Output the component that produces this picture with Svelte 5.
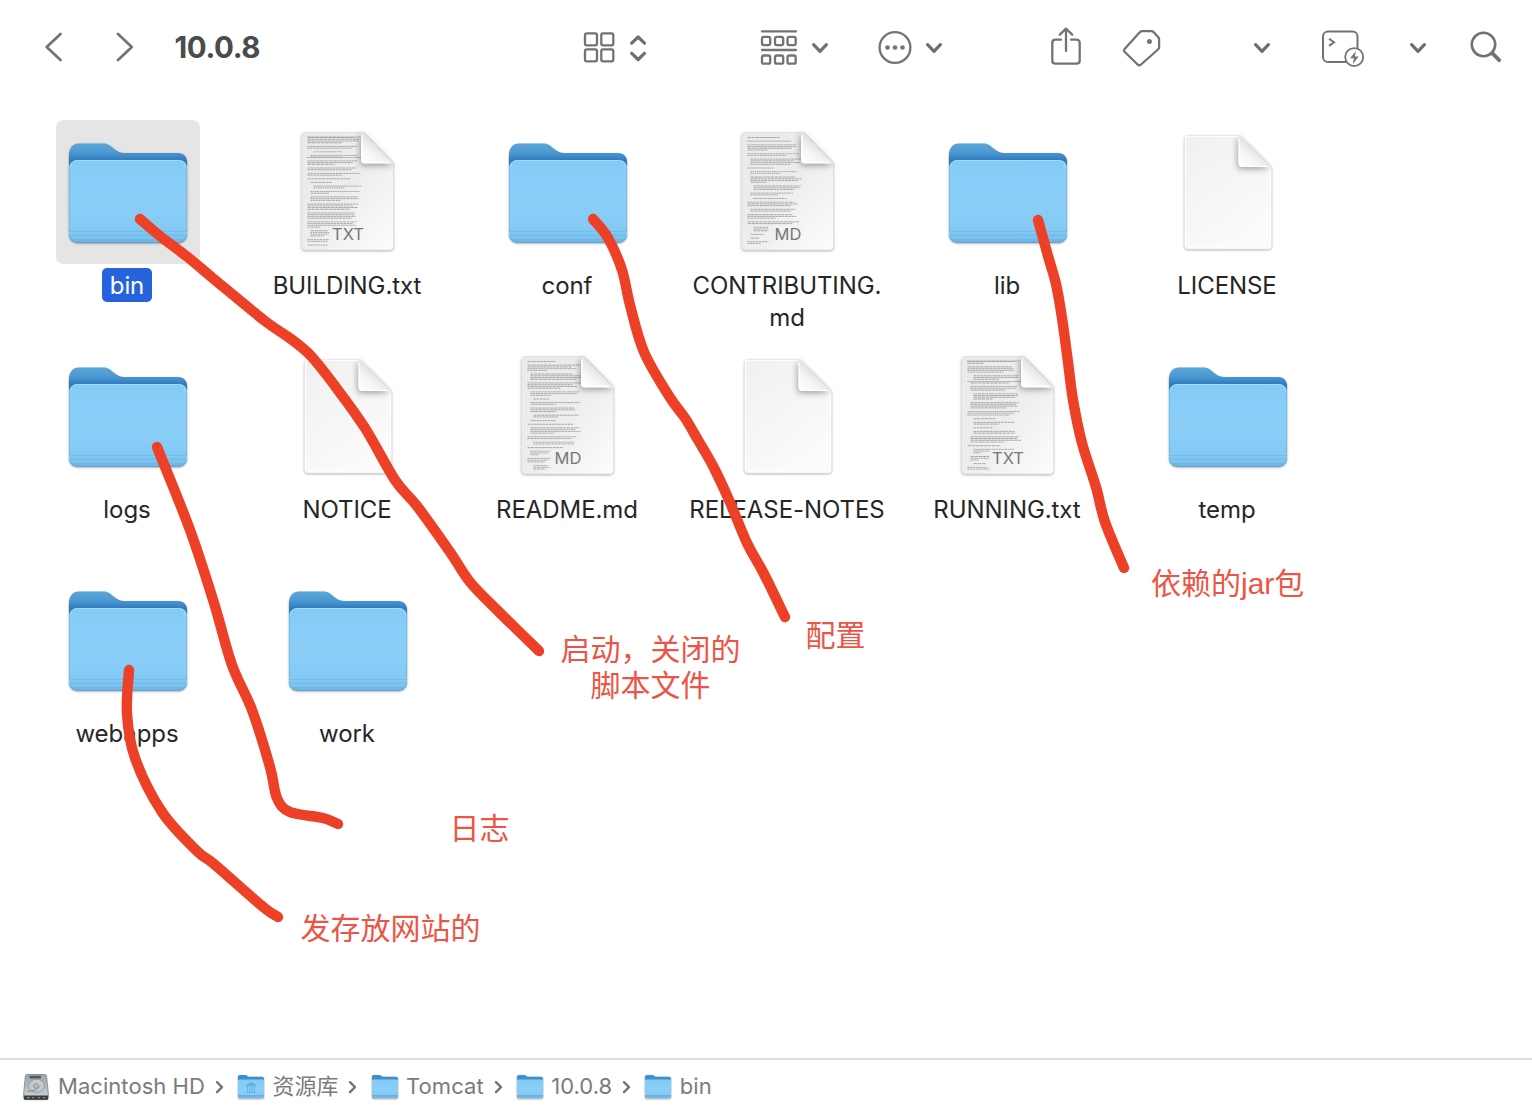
<script>
  const files = [
    { name: 'bin', kind: 'folder', selected: true },
    { name: 'BUILDING.txt', kind: 'text', tag: 'TXT', seed: 3 },
    { name: 'conf', kind: 'folder' },
    { name: 'CONTRIBUTING.md', kind: 'text', tag: 'MD', seed: 11 },
    { name: 'lib', kind: 'folder' },
    { name: 'LICENSE', kind: 'blank' },
    { name: 'logs', kind: 'folder' },
    { name: 'NOTICE', kind: 'blank' },
    { name: 'README.md', kind: 'text', tag: 'MD', seed: 7 },
    { name: 'RELEASE-NOTES', kind: 'blank' },
    { name: 'RUNNING.txt', kind: 'text', tag: 'TXT', seed: 5 },
    { name: 'temp', kind: 'folder' },
    { name: 'webapps', kind: 'folder' },
    { name: 'work', kind: 'folder' }
  ];

  const crumbs = [
    { name: 'Macintosh HD', icon: 'disk' },
    { name: '资源库', icon: 'library' },
    { name: 'Tomcat', icon: 'folder' },
    { name: '10.0.8', icon: 'folder' },
    { name: 'bin', icon: 'folder' }
  ];

  // Hand-drawn strokes, each a list of points smoothed into a curve.
  const strokes = [
    [[140,219],[160,236],[190,259],[215,280],[265,321],[291,339],[311,356],[335,386],[365,428],[395,480],[417,506],[450,552],[470,582],[497,610],[539,651]],
    [[593,219],[608,238],[622,270],[630,305],[644,352],[669,396],[685,418],[698,440],[713,466],[729,500],[747,543],[763,572],[785,617]],
    [[1038,220],[1048,256],[1056,284],[1062,318],[1068,362],[1073,400],[1082,443],[1096,487],[1105,522],[1124,568]],
    [[157,447],[190,530],[214,603],[232,665],[252,710],[270,767],[277,798],[290,812],[323,818],[338,824]],
    [[129,670],[127,714],[135,758],[162,812],[197,851],[214,864],[262,906],[278,917]]
  ];

  function smooth(p) {
    let d = `M${p[0][0]} ${p[0][1]}`;
    for (let i = 0; i < p.length - 1; i++) {
      const a = p[Math.max(i - 1, 0)], b = p[i], c = p[i + 1], e = p[Math.min(i + 2, p.length - 1)];
      d += `C${b[0] + (c[0] - a[0]) / 6} ${b[1] + (c[1] - a[1]) / 6} ${c[0] - (e[0] - b[0]) / 6} ${c[1] - (e[1] - b[1]) / 6} ${c[0]} ${c[1]}`;
    }
    return d;
  }

  // Miniature document lines: [x, y, width, dash]
  function lines(seed) {
    let s = seed * 7919;
    const rnd = () => (s = (s * 1103515245 + 12345) % 2147483648) / 2147483648;
    const out = [];
    let y = 17.5;
    let indent = 0;
    while (y < 126) {
      const n = 1 + Math.floor(rnd() * 4);
      indent = y < 30 ? 0 : Math.floor(rnd() * 3) * 3;
      for (let i = 0; i < n && y < 126; i++) {
        const max = y > 106 ? 23 : 54;
        const w = (i === n - 1 ? 0.3 + rnd() * 0.6 : 0.82 + rnd() * 0.18) * (max - indent);
        out.push([31.5 + indent, y, w, 1.4 + rnd() * 2.4]);
        y += 1.75;
      }
      y += 1.9;
    }
    return out;
  }
</script>

{#snippet chevron()}
  <svg class="chev" width="20" height="14" viewBox="0 0 20 14"><path d="M3.600 3.700 10 10.300l6.400-6.600" /></svg>
{/snippet}

{#snippet folder(size)}
  <svg width={size} height={size} viewBox="0 0 144 144">
    <g class="folder-shadow">
      <path fill="url(#back)" d="M13 36c0-8 4-12.500 10-12.500h24c5 0 6.500 1.500 10 4.500s7 5 12 5h53c6 0 9 4 9 9v68H13z" />
      <path fill="url(#front)" d="M13 49c0-6 4-9 9-9h100c6 0 9 3 9 9v64c0 6-4 9.500-9 9.500H22c-5 0-9-3.500-9-9.500z" />
    </g>
    <path fill="none" stroke="#a6dcfb" stroke-width="1" d="M14 47c1-4.500 4-6.500 8-6.500h100c4 0 7 2 8 6.500" />
    <path fill="none" stroke="#68b3e4" stroke-width="1" d="M13.500 48v65M130.500 48v65" opacity=".55" />
    <path stroke="#70bceb" stroke-width="1" d="M13 111.500h118M13 116.500h118" />
    <path stroke="#86cbf4" stroke-width="1" d="M13 112.500h118M13 117.500h118" />
    <path fill="none" stroke="#569fd0" stroke-width="1" d="M14 117c1 4 4 5.500 8 5.500h100c4 0 7-1.500 8-5.500" opacity=".8" />
  </svg>
{/snippet}

{#snippet textDoc(tag, seed)}
  <svg width="144" height="144" viewBox="0 0 144 144">
    <path class="doc-shadow" fill="url(#page)" stroke="#dcdcdc" stroke-width=".6" d="M29 12.500H86c1.500 0 2.500.5 4 2L115.500 41c1.300 1.300 2 2.200 2 3.800v81.700c0 2-1.500 3.500-3.500 3.500H29c-2 0-3.500-1.500-3.500-3.500V16c0-2 1.500-3.500 3.500-3.500z" />
    {#each lines(seed) as [x, y, w, dash]}
      <path d={`M${x} ${y}h${w}`} stroke="#8d8d8d" stroke-width=".7" stroke-dasharray={`${dash} .6`} />
    {/each}
    {#if tag === 'TXT'}
      <path d="M31 17h54M31 37.500h54" stroke="#999" stroke-width=".6" />
    {/if}
    <path class="fold-shadow" fill="url(#fold)" d="M85 12.500v27c0 2.500 1 4 4 4h28c-.6-1.200-1.500-2.200-3-3.500L89.500 15c-1.500-1.500-2.500-2.300-4.500-2.500z" />
    <path d="M86 15v25c0 1.600.8 2.500 2.500 2.500H114" fill="none" stroke="#fff" stroke-width="1.300" />
    <text x="72" y="120" text-anchor="middle">{tag}</text>
  </svg>
{/snippet}

{#snippet blankDoc()}
  <svg width="144" height="144" viewBox="0 0 144 144">
    <path class="doc-shadow" fill="url(#blank)" stroke="#e6e6e6" stroke-width=".6" d="M31.500 15.500H82c2 0 3 .5 4.500 2L114 45c1.200 1.300 1.500 2.500 1.500 4v77c0 2-1 3-3 3h-81c-2 0-3-1-3-3V18.500c0-2 1-3 3-3z" />
    <path d="M29.600 126V19c0-2 .8-2.500 2.400-2.500h50M114.400 50v76c0 1.300-.6 1.900-2 1.900H31.600" fill="none" stroke="#fff" stroke-width="1.100" />
    <path class="fold-shadow" fill="url(#fold)" d="M82.500 16v27c0 2.500 1.300 4 4 4H114z" />
    <path d="M83 18v25c0 2.300 1 3.500 3.500 3.500H112" fill="none" stroke="#fff" stroke-width="1.100" />
  </svg>
{/snippet}

<div class="window">
  <svg class="defs" width="0" height="0">
    <defs>
      <linearGradient id="back" x1="0" y1="0" x2="0" y2="1">
        <stop offset="0" stop-color="#5ba6d9" /><stop offset=".1" stop-color="#4c99d1" /><stop offset=".2" stop-color="#3079bd" /><stop offset="1" stop-color="#3079bd" />
      </linearGradient>
      <linearGradient id="front" x1="0" y1="0" x2="0" y2="1">
        <stop offset="0" stop-color="#83caf6" /><stop offset=".12" stop-color="#86ccf7" /><stop offset=".5" stop-color="#8acef8" /><stop offset=".84" stop-color="#84caf5" /><stop offset=".9" stop-color="#7ac2ee" /><stop offset="1" stop-color="#6cb5e4" />
      </linearGradient>
      <linearGradient id="page" x1="0" y1="0" x2="1" y2="1">
        <stop offset="0" stop-color="#eaeaea" /><stop offset=".5" stop-color="#ededed" /><stop offset="1" stop-color="#fdfdfd" />
      </linearGradient>
      <linearGradient id="blank" x1="0" y1="0" x2=".6" y2="1">
        <stop offset="0" stop-color="#f0f0f0" /><stop offset="1" stop-color="#fbfbfb" />
      </linearGradient>
      <linearGradient id="fold" x1=".15" y1=".95" x2=".6" y2=".4">
        <stop offset="0" stop-color="#fdfdfd" /><stop offset=".5" stop-color="#f4f4f4" /><stop offset="1" stop-color="#dedede" />
      </linearGradient>
      <linearGradient id="metal" x1="0" y1="0" x2="0" y2="1">
        <stop offset="0" stop-color="#9fa5a9" /><stop offset="1" stop-color="#cfd5d9" />
      </linearGradient>
    </defs>
  </svg>

  <header>
    <svg class="nav" width="98" height="34" viewBox="0 0 98 34"><path d="M20.500 4 6.700 17l13.800 13M78 4l13.800 13L78 30" /></svg>
    <h1>10.0.8</h1>
    <svg class="view" width="72" height="40" viewBox="0 0 72 40">
      <g class="thin"><rect x="5" y="5.400" width="12" height="12" rx="1.800" /><rect x="21.300" y="5.400" width="12" height="12" rx="1.800" /><rect x="5" y="21.400" width="12" height="12" rx="1.800" /><rect x="21.300" y="21.400" width="12" height="12" rx="1.800" /></g>
      <path class="bold" d="m51.700 15.200 6.400-6.200 6.400 6.200M51.700 25.300l6.400 6.200 6.400-6.200" />
    </svg>
    <svg class="group" width="44" height="40" viewBox="0 1.300 44 40">
      <g class="thin"><path d="M5 4.700h34M5 23.300h34" /><rect x="5" y="10.200" width="8.200" height="8.200" rx="1.800" /><rect x="18" y="10.200" width="8.200" height="8.200" rx="1.800" /><rect x="30.500" y="10.200" width="8.200" height="8.200" rx="1.800" /><rect x="5" y="28.800" width="8.200" height="8.200" rx="1.800" /><rect x="18" y="28.800" width="8.200" height="8.200" rx="1.800" /><rect x="30.500" y="28.800" width="8.200" height="8.200" rx="1.800" /></g>
    </svg>
    {@render chevron()}
    <svg class="more" width="40" height="40" viewBox="0 .5 40 40">
      <circle class="thin" cx="20" cy="20" r="15.400" /><g class="solid"><circle cx="12.500" cy="20" r="2.300" /><circle cx="20" cy="20" r="2.300" /><circle cx="27.500" cy="20" r="2.300" /></g>
    </svg>
    {@render chevron()}
    <svg class="share" width="40" height="44" viewBox="0 2 40 44">
      <path class="thin" d="M15 15.700H9.500c-2 0-3.200 1.200-3.200 3.200v17.500c0 2 1.200 3.200 3.200 3.200h21c2 0 3.200-1.200 3.200-3.200V18.900c0-2-1.200-3.200-3.200-3.200H25M20 27V5.200M13.800 10.700 20 4.700l6.200 6" />
    </svg>
    <svg class="tag" width="44" height="44" viewBox="0 .8 44 44">
      <path class="thin" d="M22.300 6h8.900c1.100 0 1.900.3 2.600 1.100l4.300 4.700c.7.800 1 1.500 1 2.500v7.400c0 1.100-.3 1.900-1.100 2.600L21 39.300c-1.200 1.100-2.300 1.100-3.400 0L4.800 26.800c-1.100-1.100-1.100-2.200 0-3.300L19.800 7.100c.7-.8 1.400-1.100 2.500-1.100z" /><circle class="solid" cx="29.400" cy="16.200" r="2.500" />
    </svg>
    <span class="only tag-menu">{@render chevron()}</span>
    <svg class="term" width="50" height="44" viewBox="0 1.500 50 44">
      <rect class="fine" x="6" y="7" width="34.500" height="30.500" rx="5" /><path class="fine" d="m12 14.200 5 3.600-5 3.600" />
      <circle cx="37.200" cy="32.600" r="9" fill="#fff" stroke="#737373" stroke-width="1.800" /><path class="solid" d="m39 26.500-6 7.200h4l-1.300 6 6-7.600h-4z" />
    </svg>
    <span class="only term-menu">{@render chevron()}</span>
    <svg class="search" width="40" height="40" viewBox="0 .7 40 40"><circle cx="17.500" cy="17.200" r="11.700" fill="none" stroke="#737373" stroke-width="2.600" /><path d="m26.200 25.900 7 7" stroke="#737373" stroke-width="3.800" stroke-linecap="round" /></svg>
  </header>

  <main>
    {#each files as f}
      <div class="file" class:selected={f.selected}>
        <div class="tile">
          {#if f.kind === 'folder'}{@render folder(144)}{:else if f.kind === 'text'}{@render textDoc(f.tag, f.seed)}{:else}{@render blankDoc()}{/if}
        </div>
        <div class="label"><span>{#if f.name === 'CONTRIBUTING.md'}CONTRIBUTING.<br />md{:else}{f.name}{/if}</span></div>
      </div>
    {/each}
  </main>

  <footer>
    {#each crumbs as c, i}
      {#if i > 0}
        <svg class="sep" width="10" height="16" viewBox="0 0 10 16"><path d="m2 3.200 5 5-5 5" /></svg>
      {/if}
      {#if c.icon === 'disk'}
        <svg class="crumb-icon" width="28" height="28" viewBox="0 0 28 28">
          <path fill="url(#metal)" stroke="#7d8387" stroke-width=".8" d="M5 1.500h18c1 0 1.400.4 1.600 1.400L26.300 20v5.500c0 .8-.5 1.200-1.200 1.200H2.900c-.7 0-1.200-.4-1.200-1.200V20L3.400 2.900c.2-1 .6-1.400 1.600-1.400z" />
          <path fill="#3a3e40" d="M2 22.500h24v3c0 .8-.5 1.200-1.200 1.200H3.200c-.7 0-1.200-.4-1.200-1.200z" /><path fill="#54585b" d="M7.500 2.800h11.500v2.700H7.500z" />
          <path fill="#8a8f91" d="M5 24h2.500v1.300H5zM10 24h2v1.300h-2zM16 24h2v1.300h-2zM21 24h2v1.300h-2z" />
          <ellipse cx="14.500" cy="12.800" rx="8" ry="6.600" fill="#c4cbd0" stroke="#8b9499" stroke-width=".9" /><ellipse cx="14" cy="13" rx="2.800" ry="2.300" fill="#b2bbc0" stroke="#8b9499" stroke-width=".8" /><path d="m5.500 18.500 8-1.500 4-3" fill="none" stroke="#899297" />
        </svg>
      {:else}
        <svg class="crumb-icon" width="28" height="28" viewBox="0 0 28 28">
          <g class="folder-shadow"><path fill="#3f8fcb" d="M1 4c0-1.200.7-2 2-2h5.500c1.500 0 2 1.800 3.500 1.800h13c1.200 0 2 .7 2 2V20H1z" /><path fill="url(#front)" d="M1 8c0-.9.500-1.400 1.400-1.400h23.200c.9 0 1.400.5 1.400 1.400v15.500c0 .9-.5 1.500-1.400 1.500H2.400C1.500 25 1 24.400 1 23.500z" /></g>
          <path d="M1 22.800h26" stroke="#5ba6d6" stroke-width=".9" />
          {#if c.icon === 'library'}<path d="m9 12.300 5-2.800 5 2.800zM9 19.500h10M10.500 13v6M12.900 13v6M15.200 13v6M17.500 13v6" fill="#5faddf" stroke="#62afe0" stroke-width=".9" />{/if}
        </svg>
      {/if}
      <span class="crumb">{c.name}</span>
    {/each}
  </footer>

  <svg class="ink" width="1532" height="1108" viewBox="0 0 1532 1108">
    {#each strokes as s}<path d={smooth(s)} />{/each}
  </svg>
  <p class="note n-bin">启动，关闭的<br />脚本文件</p>
  <p class="note n-conf">配置</p>
  <p class="note n-lib">依赖的jar包</p>
  <p class="note n-logs">日志</p>
  <p class="note n-web">发存放网站的</p>
</div>

<style>
  :global(body) { margin: 0; background: #fff; }
  .window {
    position: relative; width: 1532px; height: 1108px; overflow: hidden; background: #fff;
    display: flex; flex-direction: column;
    font-family: Inter, "Noto Sans CJK SC", sans-serif; color: #262626;
  }
  svg { display: block; flex: none; }
  .defs { position: absolute; }
  header { height: 95px; box-sizing: border-box; padding-left: 39.500px; display: flex; align-items: center; flex: none; }
  h1 { margin: 0 0 2px 37px; width: 403.500px; font-size: 29.500px; line-height: 40px; font-weight: 700; color: #4b4b4b; letter-spacing: -.4px; }
  .nav { margin-bottom: 1px; }
  .nav path { fill: none; stroke: #737373; stroke-width: 2.700; stroke-linecap: round; stroke-linejoin: round; }
  .thin { fill: none; stroke: #737373; stroke-width: 2.300; stroke-linecap: round; stroke-linejoin: round; }
  .fine { fill: none; stroke: #737373; stroke-width: 2; }
  .bold, .chev path { fill: none; stroke: #6f6f6f; stroke-width: 3.200; stroke-linecap: round; stroke-linejoin: round; }
  .solid { fill: #737373; }
  .view { margin-left: 2px; }
  .group { margin-left: 105px; }
  .chev { margin: 1px 0 0 9px; }
  .more { margin-left: 44.500px; }
  .group + .chev { margin-left: 9px; }
  .share { margin-left: 102px; }
  .tag { margin-left: 34.500px; }
  .only { display: flex; }
  .tag-menu { margin-left: 79px; }
  .term { margin-left: 45px; }
  .term-menu { margin-left: 32px; }
  .search { margin-left: 38px; }
  main { flex: 1; padding: 25px 0 0 18px; display: grid; grid-template-columns: repeat(6, 220px); grid-auto-rows: 224px; align-content: start; }
  .file { display: flex; flex-direction: column; align-items: center; }
  .tile { width: 144px; height: 144px; border-radius: 7px; }
  .selected .tile { background: #e5e5e5; }
  .folder-shadow { filter: drop-shadow(0 1px 1px rgba(0, 0, 0, .4)); }
  .doc-shadow { filter: drop-shadow(0 1.500px 1.200px rgba(0, 0, 0, .28)); }
  .fold-shadow { filter: drop-shadow(-1px 2px 3px rgba(0, 0, 0, .36)); }
  .tile text { font: 16.500px Inter, sans-serif; fill: #777; }
  .label { margin-top: 6px; text-align: center; font-size: 24px; line-height: 32px; letter-spacing: -.07px; white-space: nowrap; margin-right: 2px; }
  .selected .label { margin-top: 4px; }
  .selected .label span { display: block; padding: 2px 8px 0; background: #2463dc; color: #fff; border-radius: 5px; }
  footer { height: 50px; box-sizing: border-box; border-top: 2px solid #dfdfdf; padding: 5px 0 0 22px; display: flex; align-items: center; flex: none; color: #7b7b7b; font-size: 22px; letter-spacing: .05px; }
  .crumb { margin: 0 0 2px 7.300px; line-height: 30px; white-space: nowrap; }
  .crumb-icon:first-child + .crumb { margin-left: 8px; }
  .sep { margin: 1px 12.300px 0 9.900px; }
  .sep path { fill: none; stroke: #777; stroke-width: 2.400; stroke-linecap: round; stroke-linejoin: round; }
  .ink { position: absolute; left: 0; top: 0; pointer-events: none; }
  .ink path { fill: none; stroke: #ec4127; stroke-width: 10.400; stroke-linecap: round; stroke-linejoin: round; }
  .note { position: absolute; margin: 0; font-family: "Liberation Sans", "Noto Sans CJK SC", sans-serif; font-size: 30px; line-height: 36px; color: #ec5545; text-align: center; white-space: nowrap; }
  .n-bin { left: 560.500px; top: 632px; }
  .n-conf { left: 805.500px; top: 618px; }
  .n-lib { left: 1151px; top: 566px; }
  .n-logs { left: 449.500px; top: 811px; }
  .n-web { left: 300.500px; top: 911px; }
</style>
